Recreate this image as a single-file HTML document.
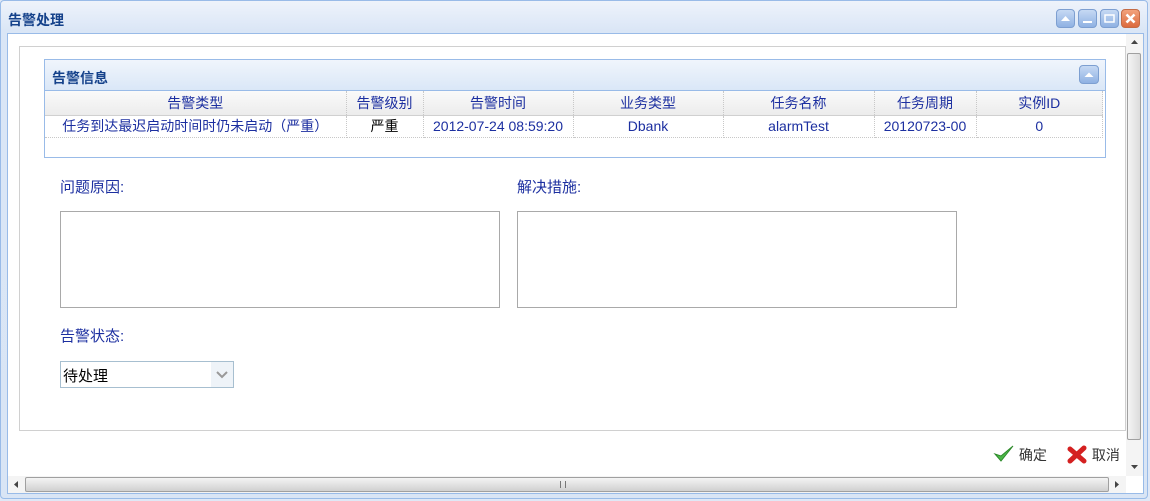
<!DOCTYPE html>
<html><head><meta charset="utf-8">
<style>
*{margin:0;padding:0;box-sizing:border-box}
body{width:1150px;height:501px;overflow:hidden;background:#dfe8f6;font-family:"Liberation Sans","Noto Sans CJK SC","WenQuanYi Zen Hei",sans-serif;font-size:13px;position:relative}
.win{position:absolute;left:0;top:0;width:1148px;height:499px;border:1px solid #99bbe8;border-radius:4px;background:linear-gradient(#eef3fb,#dae6f6 30px,#d9e5f5);}
.title{position:absolute;left:7px;top:9px;font-size:14px;font-weight:bold;color:#15428b;}
.tb{position:absolute;top:8px;width:19px;height:19px;border-radius:4px;border:1px solid #7d9fd1;background:linear-gradient(#c6d9f4,#8fb1e3)}
.body{position:absolute;left:6px;top:32px;width:1137px;height:461px;background:#fff;border:1px solid #99bbe8}
.fs{position:absolute;left:11px;top:12px;width:1107px;height:385px;border:1px solid #d0d0d0}
.panel{position:absolute;left:36px;top:25px;width:1062px;height:99px;border:1px solid #99bbe8}
.ph{height:31px;background:linear-gradient(#f0f5fc,#dae7f7);border-bottom:1px solid #99bbe8;font-weight:bold;color:#15428b;font-size:14px;padding:8px 0 0 7px}
table{border-collapse:collapse;width:1058px;font-size:14px}
th{font-weight:normal;color:#1c2fa0;height:24px;background:linear-gradient(#fafafa,#ececec);border-right:1px dotted #c8c8c8;border-bottom:1px solid #d0d0d0}
td{color:#1c2fa0;height:22px;text-align:center;border-right:1px dotted #c8c8c8;border-bottom:1px dotted #c8c8c8;white-space:nowrap}
.lbl{position:absolute;color:#1c2fa0;font-size:15px}
.ta{position:absolute;width:440px;height:97px;border:1px solid #a9a9a9}
.sel{position:absolute;left:52px;top:327px;width:174px;height:27px;border:1px solid #a7bfd0;font-size:15px;padding:3px 0 0 2px;color:#000}
.btn{position:absolute;top:410px;font-size:14px;color:#333}
</style></head><body>
<div class="win">
<div class="title">告警处理</div>
<div class="tb" style="left:1055px"><svg width="17" height="17"><path d="M4 11L8.5 6L13 11Z" fill="#fff"/></svg></div>
<div class="tb" style="left:1077px"><svg width="17" height="17"><rect x="4" y="11" width="9" height="2" fill="#fff"/></svg></div>
<div class="tb" style="left:1099px"><svg width="17" height="17"><rect x="4" y="5" width="9" height="7" fill="none" stroke="#fff" stroke-width="1.5"/></svg></div>
<div class="tb" style="left:1120px;border-color:#c46b45;background:linear-gradient(#f2a27c,#dc6a3e)"><svg width="17" height="17"><path d="M4.5 4.5L12.5 12.5M12.5 4.5L4.5 12.5" stroke="#fff" stroke-width="2.6"/></svg></div>
<div class="body">
 <div class="fs"></div>
 <div class="panel">
  <div class="ph">告警信息</div>
  <div class="tb" style="left:1034px;top:5px;width:20px;height:19px"><svg width="18" height="17"><path d="M4.5 11L9 6.5L13.5 11Z" fill="#fff"/></svg></div>
  <table>
   <tr><th style="width:301px">告警类型</th><th style="width:77px">告警级别</th><th style="width:150px">告警时间</th><th style="width:150px">业务类型</th><th style="width:151px">任务名称</th><th style="width:102px">任务周期</th><th>实例ID</th></tr>
   <tr><td>任务到达最迟启动时间时仍未启动（严重）</td><td style="color:#000">严重</td><td>2012-07-24 08:59:20</td><td>Dbank</td><td>alarmTest</td><td>20120723-00</td><td>0</td></tr>
  </table>
 </div>
 <div class="lbl" style="left:52px;top:142px">问题原因:</div>
 <div class="lbl" style="left:509px;top:142px">解决措施:</div>
 <div class="ta" style="left:52px;top:177px"></div>
 <div class="ta" style="left:509px;top:177px"></div>
 <div class="lbl" style="left:52px;top:291px">告警状态:</div>
 <div class="sel">待处理<div style="position:absolute;right:0;top:0;width:22px;height:25px;background:#eef3f8"><svg width="22" height="25"><path d="M6 10L11 15L16 10" fill="none" stroke="#999" stroke-width="2"/></svg></div></div>
 <div class="btn" style="left:985px"><svg width="22" height="20" style="vertical-align:-4px"><path d="M2 10L8 17L20 2L8 12Z" fill="#4cb848" stroke="#2d8a2a" stroke-width="1"/></svg> 确定</div>
 <div class="btn" style="left:1058px"><svg width="22" height="20" style="vertical-align:-4px"><path d="M4 5L18 17M18 4L4 17" stroke="#d42020" stroke-width="5" stroke-linecap="round"/></svg> 取消</div>
 <div style="position:absolute;left:1118px;top:0;width:17px;height:442px;background:#f4f4f4">
  <svg width="17" height="17"><path d="M5 10L8.5 6L12 10Z" fill="#444"/></svg>
  <div style="position:absolute;left:1px;top:19px;width:14px;height:387px;border:1px solid #a0a0a0;border-radius:2px;background:linear-gradient(90deg,#f4f4f4,#dcdcdc)"></div>
  <svg width="17" height="17" style="position:absolute;top:424px;left:0"><path d="M5 7L8.5 11L12 7Z" fill="#444"/></svg>
 </div>
 <div style="position:absolute;left:0;top:442px;width:1118px;height:17px;background:#f4f4f4">
  <svg width="17" height="17" style="position:absolute;left:0"><path d="M10 5L6 8.5L10 12Z" fill="#444"/></svg>
  <div style="position:absolute;left:17px;top:1px;width:1084px;height:15px;border:1px solid #a0a0a0;border-radius:2px;background:linear-gradient(#f4f4f4,#d0d0d0)"><div style="position:absolute;left:534px;top:3px;width:6px;height:7px;border-left:1px solid #777;border-right:1px solid #777"></div></div>
  <svg width="17" height="17" style="position:absolute;left:1100px"><path d="M7 5L11 8.5L7 12Z" fill="#444"/></svg>
 </div>
</div>
</div>
</body></html>
